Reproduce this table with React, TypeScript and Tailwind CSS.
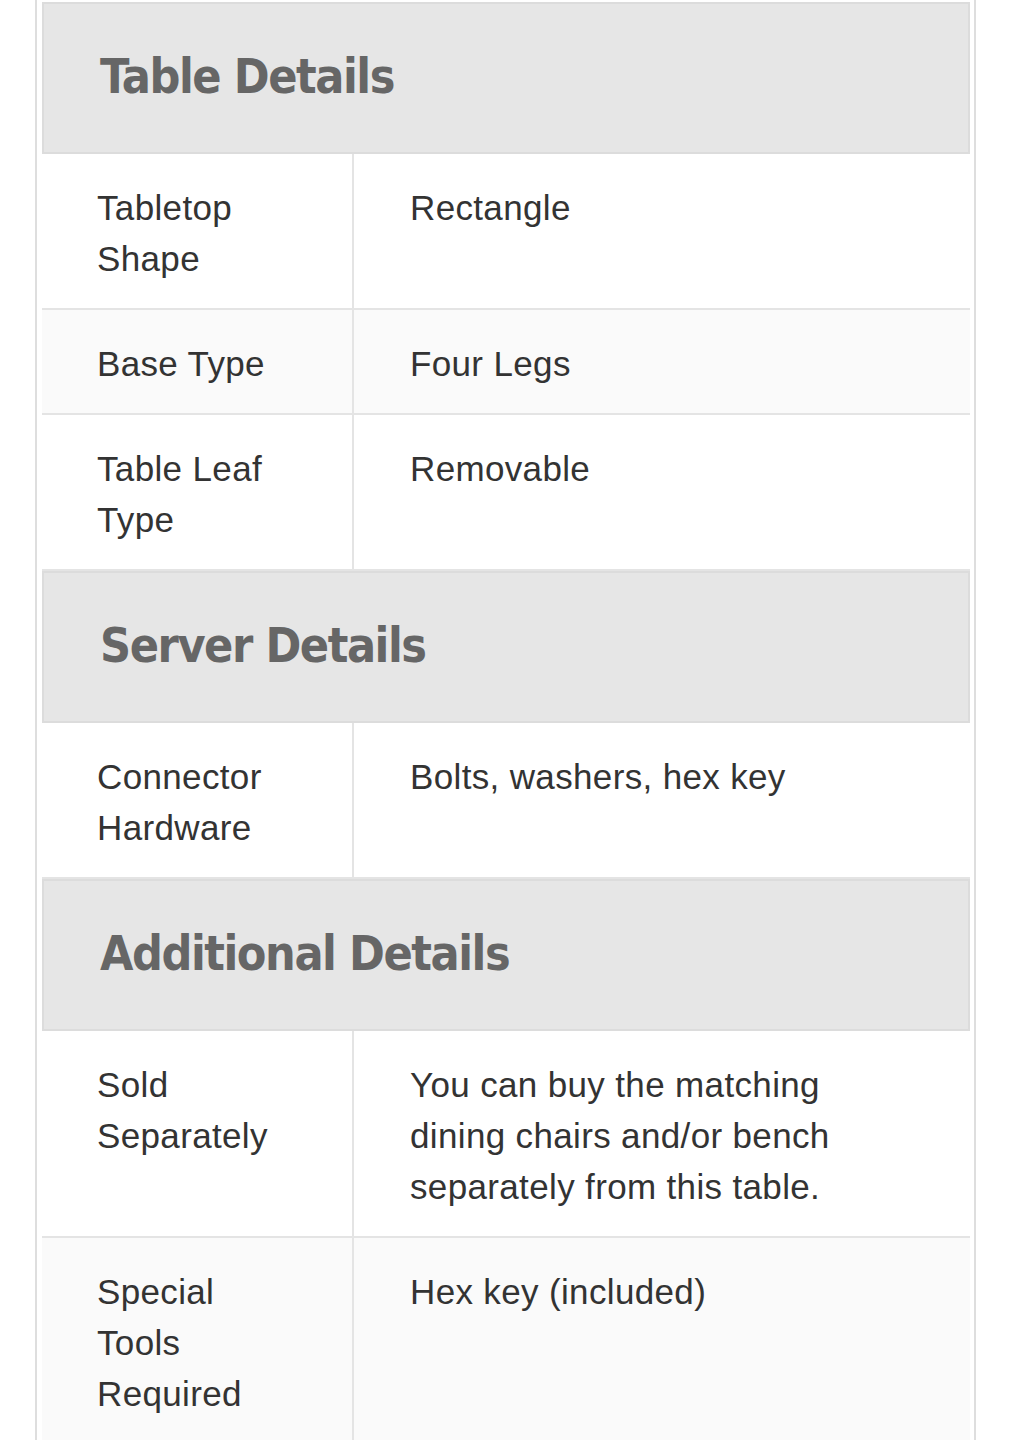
import React from 'react';

type Row = { label: string[]; value: string[] };
type Section = { title: string; rows: Row[] };

const sections: Section[] = [
  {
    title: 'Table Details',
    rows: [
      { label: ['Tabletop', 'Shape'], value: ['Rectangle'] },
      { label: ['Base Type'], value: ['Four Legs'] },
      { label: ['Table Leaf', 'Type'], value: ['Removable'] },
    ],
  },
  {
    title: 'Server Details',
    rows: [{ label: ['Connector', 'Hardware'], value: ['Bolts, washers, hex key'] }],
  },
  {
    title: 'Additional Details',
    rows: [
      {
        label: ['Sold', 'Separately'],
        value: ['You can buy the matching', 'dining chairs and/or bench', 'separately from this table.'],
      },
      { label: ['Special', 'Tools', 'Required'], value: ['Hex key (included)'] },
    ],
  },
];

function Lines({ lines }: { lines: string[] }) {
  return (
    <>
      {lines.map((l) => (
        <div key={l}>{l}</div>
      ))}
    </>
  );
}

export default function App() {
  return (
    <div className="min-h-[1440px] bg-white">
      <div className="ml-[35px] w-[941px] min-h-[1440px] border-x-2 border-[#dedede] pl-[5px] pr-[4px] pt-[2px]">
        {sections.map((s) => (
          <div key={s.title}>
            <div className="flex h-[152px] items-center border-2 border-[#dcdcdc] bg-[#e6e6e6] pl-[56px] pb-[4px]">
              <h2 className="font-['DejaVu_Sans',sans-serif] font-stretch-condensed text-[48px] font-bold leading-none tracking-[-0.03em] text-[#666666]">
                {s.title}
              </h2>
            </div>
            {s.rows.map((r, i) => (
              <div
                key={r.label.join(' ')}
                className={`grid grid-cols-[312px_1fr] border-b-2 border-[#e4e4e4] font-['Liberation_Sans',Arial,sans-serif] text-[35px] leading-[51px] tracking-[0.01em] text-[#333333] ${
                  i % 2 === 1 ? 'bg-[#fafafa]' : 'bg-white'
                }`}
              >
                <div className="border-r-2 border-[#e4e4e4] pt-[28px] pb-[24px] pl-[55px]">
                  <Lines lines={r.label} />
                </div>
                <div className="pt-[28px] pb-[24px] pl-[56px]">
                  <Lines lines={r.value} />
                </div>
              </div>
            ))}
          </div>
        ))}
      </div>
    </div>
  );
}
